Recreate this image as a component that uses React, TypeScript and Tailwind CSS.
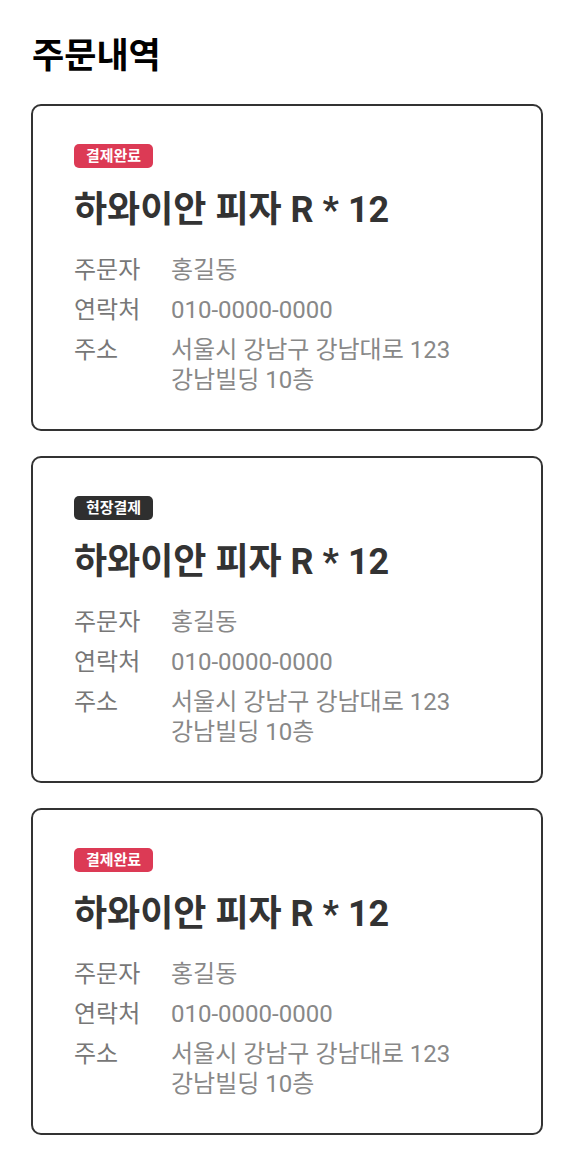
import React from "react";

type Order = { status: "paid" | "onsite" };

const orders: Order[] = [{ status: "paid" }, { status: "onsite" }, { status: "paid" }];

function Badge({ status }: { status: Order["status"] }) {
  if (status === "paid") {
    return (
      <span className="inline-flex h-[24px] w-[79px] items-center justify-center rounded-[5px] bg-[#dc3a55] text-[15px] font-bold leading-none text-white">
        결제완료
      </span>
    );
  }
  return (
    <span className="inline-flex h-[24px] w-[79px] items-center justify-center rounded-[5px] bg-[#2f2f2f] text-[15px] font-bold leading-none text-white">
      현장결제
    </span>
  );
}

function Row({ label, children }: { label: string; children: React.ReactNode }) {
  return (
    <div className="flex">
      <div className="w-[97px] shrink-0 text-[#777]">{label}</div>
      <div className="text-[#888]">{children}</div>
    </div>
  );
}

function OrderCard({ order }: { order: Order }) {
  return (
    <div className="flex flex-col items-start rounded-[10px] border-2 border-[#333] pb-[34px] pl-[41px] pr-6 pt-[38px]">
      <Badge status={order.status} />
      <div className="mt-[20px] text-[36px] font-bold leading-[44px] text-[#333]">하와이안 피자 R * 12</div>
      <div className="mt-[23px] flex flex-col gap-[10px] text-[24px] leading-[30px]">
        <Row label="주문자">홍길동</Row>
        <Row label="연락처">010-0000-0000</Row>
        <Row label="주소">
          서울시 강남구 강남대로 123
          <br />
          강남빌딩 10층
        </Row>
      </div>
    </div>
  );
}

export default function App() {
  return (
    <div
      className="min-h-screen bg-white px-[31px] pt-[34px] pb-10"
      style={{ fontFamily: 'Roboto, "Noto Sans CJK KR", sans-serif' }}
    >
      <h1 className="pl-px text-[35px] font-bold leading-[46px] text-black">주문내역</h1>
      <div className="mt-[24px] flex flex-col gap-[25px]">
        {orders.map((o, i) => (
          <OrderCard key={i} order={o} />
        ))}
      </div>
    </div>
  );
}
